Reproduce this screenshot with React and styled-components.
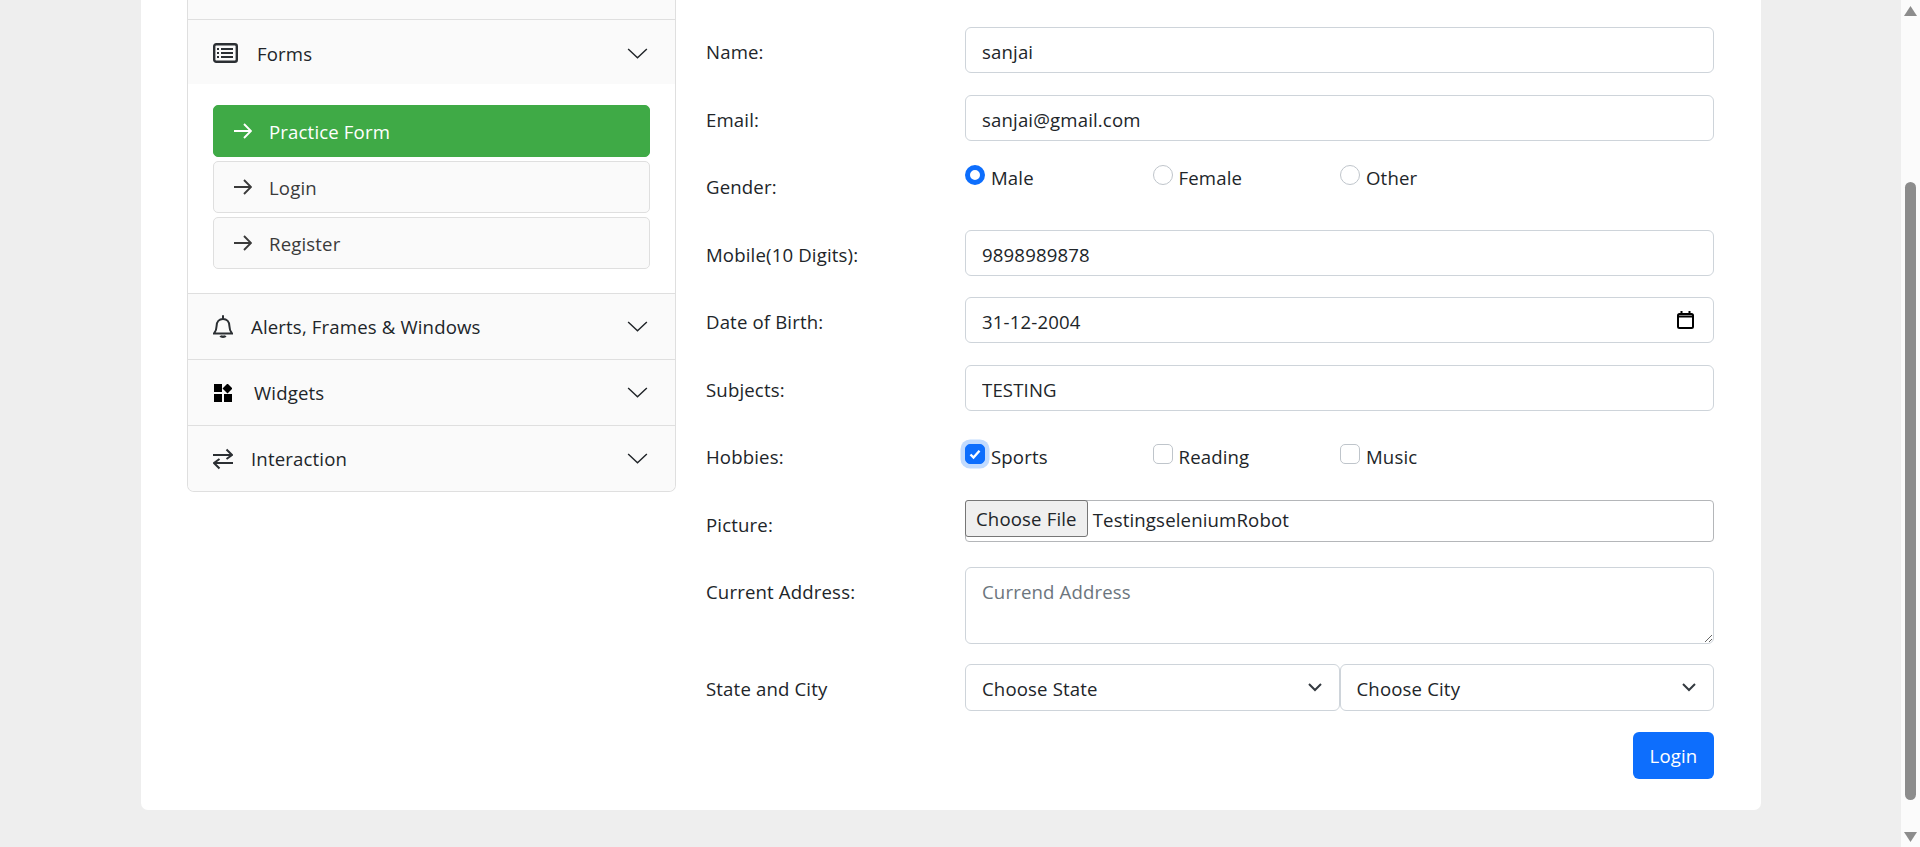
import React from 'react';
import styled, { createGlobalStyle } from 'styled-components';

const GlobalStyle = createGlobalStyle`
  html, body {
    margin: 0;
    height: 100%;
    overflow: hidden;
    background: #eeeeee;
  }
  * {
    box-sizing: border-box;
  }
`;

const Screen = styled.div`
  display: grid;
  grid-template-columns: 1fr 19px;
  height: 847px;
  font-family: 'Open Sans', 'Noto Sans', sans-serif;
  font-size: 18.6px;
  letter-spacing: 0.15px;
  color: #212529;
`;

const Page = styled.main`
  padding: 0 140px 0 141px;
  overflow: hidden;
`;

const Card = styled.div`
  display: grid;
  grid-template-columns: 489px 1fr;
  gap: 31px;
  height: 810px;
  padding: 0 47px 0 46px;
  background: #ffffff;
  border-radius: 0 0 7px 7px;
`;

const Sidebar = styled.aside`
  align-self: start;
  background: #ffffff;
  border: 1px solid #dfdfdf;
  border-top: 0;
  border-radius: 0 0 7px 7px;
  overflow: hidden;
`;

const ClippedHead = styled.div`
  height: 20px;
  background: #fafafa;
  border-bottom: 1px solid #dfdfdf;
`;

const Head = styled.div`
  display: flex;
  align-items: center;
  height: ${(p) => (p.$open ? '64px' : '66px')};
  padding: ${(p) => (p.$open ? '2px' : '0')} 25px 0;
  background: #fafafa;
  border-top: ${(p) => (p.$open ? '0' : '1px solid #dfdfdf')};
`;

const HeadIcon = styled.span`
  display: flex;
  justify-content: center;
  width: ${(p) => p.$w}px;
  margin-right: ${(p) => p.$gap}px;
  color: #2b2f33;
`;

const HeadText = styled.span`
  flex: 1;
`;

const Chevron = styled.svg`
  width: 23px;
  height: 23px;
  margin-right: 1px;
`;

const SubList = styled.div`
  display: flex;
  flex-direction: column;
  gap: 4px;
  padding: 21px 25px 24px;
`;

const SubItem = styled.a`
  display: flex;
  align-items: center;
  gap: 17px;
  height: 52px;
  padding: 0 20px;
  border: 1px solid ${(p) => (p.$active ? '#3faa46' : '#dfdfdf')};
  border-radius: 5px;
  background: ${(p) => (p.$active ? '#3faa46' : '#fafafa')};
  color: ${(p) => (p.$active ? '#ffffff' : '#3a3a3a')};
`;

const FormArea = styled.form`
  padding-top: 27px;
  display: flex;
  flex-direction: column;
`;

const Row = styled.div`
  display: grid;
  grid-template-columns: 258px 1fr;
  margin-bottom: ${(p) => p.$gap || 21.5}px;
  min-height: 46px;
`;

const Label = styled.label`
  margin-left: -1px;
  padding-top: ${(p) => p.$top || 12}px;
`;

const Field = styled.input`
  display: block;
  width: 100%;
  height: 46px;
  padding: 3px 16px 0;
  border: 1px solid #ced4da;
  border-radius: 6px;
  background: #ffffff;
  color: #212529;
  font: inherit;
  letter-spacing: inherit;
  outline: none;
`;

const DateWrap = styled.div`
  position: relative;
`;

const CalendarIcon = styled.svg`
  position: absolute;
  top: 14px;
  right: 20px;
  width: 17px;
  height: 18px;
`;

const OptionRow = styled.div`
  display: grid;
  grid-template-columns: repeat(3, 187.5px);
  align-items: start;
  padding-top: ${(p) => p.$top}px;
`;

const Option = styled.label`
  display: flex;
  align-items: flex-start;
  gap: 6px;
  line-height: 25px;
`;

const Radio = styled.input.attrs({ type: 'radio' })`
  appearance: none;
  flex: none;
  width: 20px;
  height: 20px;
  margin: 0;
  border-radius: 50%;
  border: 1px solid #bfc5cb;
  background: #ffffff;
  &:checked {
    border: 5px solid #0d6efd;
  }
`;

const CheckBox = styled.span`
  flex: none;
  display: flex;
  align-items: center;
  justify-content: center;
  width: 20px;
  height: 20px;
  border-radius: 5px;
  border: 1px solid ${(p) => (p.$checked ? '#0d6efd' : '#bfc5cb')};
  background: ${(p) => (p.$checked ? '#0d6efd' : '#ffffff')};
  box-shadow: ${(p) => (p.$checked ? '0 0 0 4.5px #c2dbfe' : 'none')};
`;

const FileBox = styled.div`
  display: flex;
  align-items: flex-start;
  gap: 5px;
  height: 42px;
  border: 1px solid #b4b6b9;
  border-radius: 4px;
  line-height: 37px;
`;

const FileButton = styled.span`
  display: flex;
  align-items: center;
  height: 37px;
  margin: -1px 0 0 -1px;
  padding: 0 10px;
  background: #efefef;
  border: 1px solid #767676;
  border-radius: 3px;
`;

const AddressBox = styled.textarea`
  display: block;
  width: 100%;
  height: 77px;
  padding: 11px 16px;
  border: 1px solid #ced4da;
  border-radius: 6px;
  color: #212529;
  font: inherit;
  letter-spacing: inherit;
  outline: none;
  &::placeholder {
    color: #6c757d;
    opacity: 1;
  }
`;

const SelectPair = styled.div`
  display: grid;
  grid-template-columns: 1fr 1fr;
`;

const Select = styled.select`
  appearance: none;
  height: 47px;
  padding: 3px 16px 0;
  border: 1px solid #ced4da;
  border-radius: 6px;
  background: #ffffff;
  color: #212529;
  font: inherit;
  letter-spacing: inherit;
  outline: none;
`;

const SelectWrap = styled.div`
  position: relative;
  display: grid;
`;

const SelectArrow = styled.svg`
  position: absolute;
  top: 18px;
  right: 17px;
  width: 16px;
  height: 12px;
`;

const Actions = styled.div`
  display: flex;
  justify-content: flex-end;
`;

const Submit = styled.button`
  width: 81px;
  height: 47px;
  padding: 0;
  border: 0;
  border-radius: 6px;
  background: #0d6efd;
  color: #ffffff;
  font: inherit;
  letter-spacing: inherit;
`;

const Scrollbar = styled.div`
  display: flex;
  flex-direction: column;
  align-items: center;
  height: 847px;
  padding-top: 6px;
  background: #fbfbfb;
`;

const ScrollArrow = styled.svg`
  flex: none;
  width: 13px;
  height: 10px;
  fill: #8c8c8c;
`;

const Thumb = styled.div`
  flex: none;
  width: 11px;
  height: 618px;
  margin: 166px 0 32px;
  border-radius: 6px;
  background: #8c8c8c;
`;

const ChevronDown = () => (
  <Chevron viewBox="0 0 16 16" fill="none" stroke="#212529" strokeWidth="1">
    <path d="M1.500 4.800 8 11l6.500-6.200" />
  </Chevron>
);

const Arrow = () => (
  <svg width="18" height="18" viewBox="0 0 18 18" fill="none" stroke="currentColor" strokeWidth="1.900">
    <path d="M0 9h17M10 2l7 7-7 7" />
  </svg>
);

const FormsIcon = () => (
  <svg width="25" height="20" viewBox="0 0 25 20" fill="none" stroke="currentColor">
    <rect x="1.200" y="1.200" width="22.600" height="17.600" rx="2" strokeWidth="2.400" />
    <path d="M8 6h12M8 10h12M8 14h12" strokeWidth="1.900" />
    <path d="M4 6h2M4 10h2M4 14h2" strokeWidth="2.200" />
  </svg>
);

const BellIcon = () => (
  <svg width="20" height="23" viewBox="0 0 20 23" fill="none" stroke="currentColor" strokeWidth="2">
    <path d="M1 18.500c1.500-1.800 2.600-3.500 2.600-7.500 0-4 2.600-7 6.400-7s6.400 3 6.400 7c0 4 1.100 5.700 2.600 7.500z" />
    <path d="M10 1v3" strokeLinecap="round" />
    <path d="M7.500 20.800c.6 1.200 4.400 1.200 5 0" strokeWidth="2.400" />
  </svg>
);

const WidgetsIcon = () => (
  <svg width="18" height="18" viewBox="0 0 18 18" fill="#000000">
    <rect x="0" y="0" width="8" height="8" />
    <rect x="0" y="10" width="8" height="8" />
    <rect x="10" y="10" width="8" height="8" />
    <path d="M13.500 -.5l5 5-5 5-5-5z" />
  </svg>
);

const SwapIcon = () => (
  <svg width="20" height="22" viewBox="0 0 20 22" fill="none" stroke="currentColor" strokeWidth="2">
    <path d="M0 7h19M13.500 1.500 19 7l-5.500 4" />
    <path d="M20 15H1M6.500 20.500 1 15l5.500-4" />
  </svg>
);

const menuItems = [
  { name: 'Alerts, Frames & Windows', icon: <BellIcon />, gap: 18 },
  { name: 'Widgets', icon: <WidgetsIcon />, gap: 21 },
  { name: 'Interaction', icon: <SwapIcon />, gap: 18 },
];

const App = () => (
  <Screen>
    <GlobalStyle />
    <Page>
      <Card>
        <Sidebar>
          <ClippedHead />
          <Head $open>
            <HeadIcon $w={25} $gap={19}><FormsIcon /></HeadIcon>
            <HeadText>Forms</HeadText>
            <ChevronDown />
          </Head>
          <SubList>
            <SubItem $active><Arrow />Practice Form</SubItem>
            <SubItem><Arrow />Login</SubItem>
            <SubItem><Arrow />Register</SubItem>
          </SubList>
          {menuItems.map((item) => (
            <Head key={item.name}>
              <HeadIcon $w={20} $gap={item.gap}>{item.icon}</HeadIcon>
              <HeadText>{item.name}</HeadText>
              <ChevronDown />
            </Head>
          ))}
        </Sidebar>
        <FormArea>
          <Row>
            <Label>Name:</Label>
            <Field defaultValue="sanjai" />
          </Row>
          <Row>
            <Label>Email:</Label>
            <Field defaultValue="sanjai@gmail.com" />
          </Row>
          <Row>
            <Label>Gender:</Label>
            <OptionRow $top={3}>
              <Option><Radio name="gender" defaultChecked />Male</Option>
              <Option><Radio name="gender" />Female</Option>
              <Option><Radio name="gender" />Other</Option>
            </OptionRow>
          </Row>
          <Row>
            <Label>Mobile(10 Digits):</Label>
            <Field defaultValue="9898989878" />
          </Row>
          <Row>
            <Label>Date of Birth:</Label>
            <DateWrap>
              <Field defaultValue="31-12-2004" />
              <CalendarIcon viewBox="0 0 17 18" fill="none" stroke="#000000" strokeWidth="2">
                <rect x="1" y="3" width="15" height="14" rx="1.500" />
                <path d="M1 5.500h15M4.500 0v3M12.500 0v3" />
              </CalendarIcon>
            </DateWrap>
          </Row>
          <Row>
            <Label>Subjects:</Label>
            <Field defaultValue="TESTING" />
          </Row>
          <Row>
            <Label>Hobbies:</Label>
            <OptionRow $top={12}>
              <Option>
                <CheckBox $checked>
                  <svg width="14" height="14" viewBox="0 0 14 14" fill="none" stroke="#ffffff" strokeWidth="2.400">
                    <path d="M2.500 7.500 5.500 10.500 11.500 3.800" />
                  </svg>
                </CheckBox>
                Sports
              </Option>
              <Option><CheckBox />Reading</Option>
              <Option><CheckBox />Music</Option>
            </OptionRow>
          </Row>
          <Row>
            <Label>Picture:</Label>
            <FileBox>
              <FileButton>Choose File</FileButton>
              TestingseleniumRobot
            </FileBox>
          </Row>
          <Row $gap={19.5}>
            <Label>Current Address:</Label>
            <AddressBox placeholder="Currend Address" />
          </Row>
          <Row>
            <Label>State and City</Label>
            <SelectPair>
              <SelectWrap>
                <Select defaultValue="state"><option value="state">Choose State</option></Select>
                <SelectArrow viewBox="0 0 16 12" fill="none" stroke="#343a40" strokeWidth="2"><path d="M2 2l6 6 6-6" /></SelectArrow>
              </SelectWrap>
              <SelectWrap>
                <Select defaultValue="city"><option value="city">Choose City</option></Select>
                <SelectArrow viewBox="0 0 16 12" fill="none" stroke="#343a40" strokeWidth="2"><path d="M2 2l6 6 6-6" /></SelectArrow>
              </SelectWrap>
            </SelectPair>
          </Row>
          <Actions>
            <Submit type="button">Login</Submit>
          </Actions>
        </FormArea>
      </Card>
    </Page>
    <Scrollbar>
      <ScrollArrow viewBox="0 0 13 10"><path d="M6.500 0 13 10H0z" /></ScrollArrow>
      <Thumb />
      <ScrollArrow viewBox="0 0 13 10"><path d="M0 0h13L6.500 10z" /></ScrollArrow>
    </Scrollbar>
  </Screen>
);

export default App;
